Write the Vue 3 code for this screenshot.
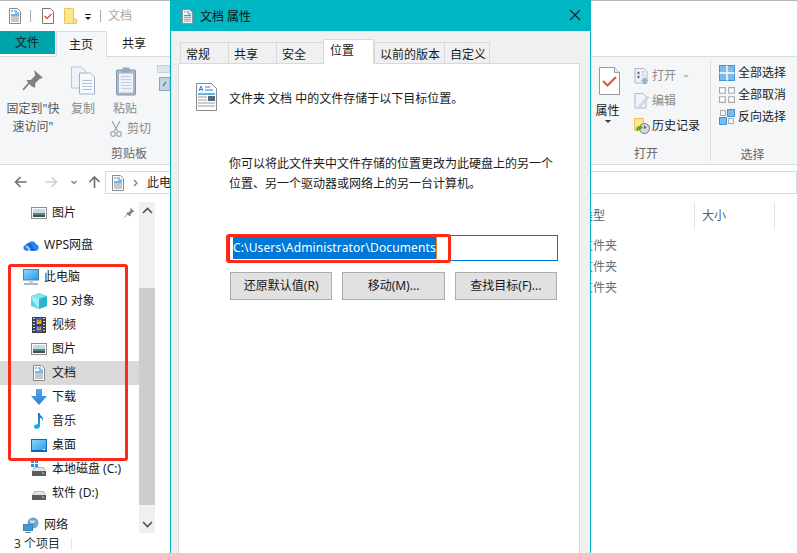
<template>
  <div class="screen">
    <!-- icon sheet -->
    <svg class="defs" width="0" height="0">
      <defs>
        <linearGradient id="g-sky" x1="0" y1="0" x2="1" y2="1">
          <stop offset="0" stop-color="#8fd6fb"/>
          <stop offset="1" stop-color="#1f9cf0"/>
        </linearGradient>
        <linearGradient id="g-down" x1="0" y1="0" x2="0" y2="1">
          <stop offset="0" stop-color="#5aa5ea"/>
          <stop offset="1" stop-color="#2b7fd6"/>
        </linearGradient>
        <linearGradient id="g-note" x1="0" y1="0" x2="0" y2="1">
          <stop offset="0" stop-color="#1565d8"/>
          <stop offset="1" stop-color="#1ab4f5"/>
        </linearGradient>
      </defs>
      <symbol id="doc" viewBox="0 0 12 16">
        <path d="M.5.500h8l3 3v12H.5z" fill="#fff" stroke="#8a8a8a"/>
        <path d="M2 3h2M5 3h3M6 5h4" stroke="#2b7fd6"/>
        <path d="M2 7h8" stroke="#2b9be0" stroke-width="1.400"/>
        <path d="M2 9h8M2 11h8M2 13h8" stroke="#8f8f8f"/>
      </symbol>
      <symbol id="checkdoc" viewBox="0 0 12 16">
        <path d="M.5.500h8l3 3v12H.5z" fill="#fff" stroke="#777"/>
        <path d="M2.500 8l2.500 2.500 4.500-4.500" fill="none" stroke="#e8582a" stroke-width="1.500"/>
      </symbol>
      <symbol id="folder" viewBox="0 0 13 16">
        <path d="M.5.500h9v15h-9z" fill="#fde58e" stroke="#e8c65a"/>
        <path d="M9.500 11h3v4.500h-3z" fill="#fde58e" stroke="#e8c65a"/>
      </symbol>
      <symbol id="pic" viewBox="0 0 16 12">
        <rect x=".5" y=".5" width="15" height="11" fill="#fff" stroke="#8d8d8d"/>
        <rect x="2" y="2" width="12" height="4" fill="#c3d9e8"/>
        <rect x="2" y="6" width="12" height="2" fill="#5a8a78"/>
        <rect x="2" y="8" width="12" height="2" fill="#3f4f58"/>
      </symbol>
      <symbol id="cloud" viewBox="0 0 16 12">
        <path d="M3.200 11.800A3 3 0 0 1 2.600 5.900 3 3 0 0 1 5.500 4 4.200 4.200 0 0 1 13 5.300 3.300 3.300 0 0 1 12.800 11.800z" fill="#2a86ee"/>
        <path d="M5.500 4c2 .3 3.500 2 3.800 4l3.700 3.800H8.200C8 8.500 6.500 6.500 3.500 5.700z" fill="#1668d0"/>
        <path d="M6.500 11.800C6.300 9.500 5 8 3 7.500" stroke="#fff" stroke-width="1.100" fill="none"/>
      </symbol>
      <symbol id="pc" viewBox="0 0 16 16">
        <rect x=".5" y=".5" width="15" height="10.500" fill="url(#g-sky)" stroke="#5a7f9a"/>
        <path d="M6 11.500h4v2.500H6z" fill="#c3ccd6"/>
        <path d="M1 15h14" stroke="#8aa2b8" stroke-width="1.500"/>
      </symbol>
      <symbol id="cube" viewBox="0 0 16 16">
        <path d="M8 0l8 3v10l-8 3-8-3V3z" fill="#58d6e6"/>
        <path d="M8 0l8 3-8 3-8-3z" fill="#7fe3ee"/>
        <path d="M8 6v10l8-3V3z" fill="#2ab4d2"/>
        <path d="M0 3l8 3v10L2 8z" fill="#a6eef2"/>
      </symbol>
      <symbol id="film" viewBox="0 0 14 16">
        <rect width="14" height="16" fill="#3a3f45"/>
        <path d="M1 1.500h2M1 4.500h2M1 7.500h2M1 10.500h2M1 13.500h2M11 1.500h2M11 4.500h2M11 7.500h2M11 10.500h2M11 13.500h2" stroke="#d8d8d8"/>
        <rect x="4" y="1" width="6" height="6" fill="#4d67c8"/>
        <rect x="4" y="9" width="6" height="6" fill="#3f60c0"/>
        <rect x="5" y="3" width="4" height="4" fill="#e8b32a"/>
        <rect x="5" y="10" width="4" height="3" fill="#d9a020"/>
        <path d="M6 4h2M6 11h2" stroke="#b5352a"/>
      </symbol>
      <symbol id="down" viewBox="0 0 16 16">
        <path d="M5 0h6v7h5l-8 9-8-9h5z" fill="url(#g-down)"/>
      </symbol>
      <symbol id="music" viewBox="0 0 10 16">
        <path d="M4 0h1.500c.3 3 4.500 3.500 3.500 8-.5-2-2-3-3-3.200V13c0 2-2 3-3.500 3S0 15 0 13.700 1.800 11 4 11.300z" fill="url(#g-note)"/>
      </symbol>
      <symbol id="desk" viewBox="0 0 16 13">
        <rect x=".5" y=".5" width="15" height="12" fill="url(#g-sky)" stroke="#1668b0"/>
        <path d="M1 11.500h14" stroke="#0f5fa8"/>
        <path d="M12 10.500h2" stroke="#fff"/>
      </symbol>
      <symbol id="drive" viewBox="0 0 14 9">
        <path d="M2.500.5h9l2 4H.5z" fill="#e3e5e6" stroke="#b5b5b5"/>
        <rect x="0" y="4" width="14" height="5" fill="#5a5e60"/>
        <rect x="10" y="5.500" width="2" height="1.500" fill="#5fe35f"/>
      </symbol>
      <symbol id="net" viewBox="0 0 16 16">
        <circle cx="10" cy="6" r="5.500" fill="#6aa5d8"/>
        <path d="M7 3c2 1 4 0 6 1-1 2-5 3-6 1z" fill="#c6dcf0"/>
        <rect x=".5" y="7.500" width="9" height="6" fill="#3a9ce0" stroke="#4f7fa8"/>
        <path d="M2 15.500h6" stroke="#6b8aa8"/>
      </symbol>
      <symbol id="pin" viewBox="0 0 20 20">
        <path d="M11 1l8 7-3 1-4 4 0 4-3-1-3-3-2-3 4 0 4-4z" fill="#808080"/>
        <path d="M7 12l-6 7" stroke="#808080" stroke-width="1.600"/>
      </symbol>
      <symbol id="copy" viewBox="0 0 24 28">
        <path d="M.5.500h10l4 4v17H.5z" fill="#eef3fa" stroke="#b7c6da"/>
        <path d="M8.500 6.500h11l4 4v17h-15z" fill="#f6f9fd" stroke="#9fb2cc"/>
        <path d="M11 14h10M11 17h10M11 20h10M11 23h10" stroke="#b3c1d4"/>
      </symbol>
      <symbol id="paste" viewBox="0 0 20 29">
        <rect x=".5" y="3.500" width="19" height="25" rx="1" fill="#a7b7cc" stroke="#8596ad"/>
        <rect x="3" y="7" width="14" height="19" fill="#eef2f8"/>
        <path d="M5 10h10M5 13h10M5 16h10M5 19h10M5 22h10" stroke="#c2cddd"/>
        <rect x="6.500" y="1" width="7" height="5" fill="#97a8bf"/>
      </symbol>
      <symbol id="scissors" viewBox="0 0 12 16">
        <path d="M2 0l5.500 10M10 0L4.500 10" stroke="#9aa8bb" stroke-width="1.300" fill="none"/>
        <circle cx="3" cy="13" r="2.300" fill="none" stroke="#9aa8bb" stroke-width="1.200"/>
        <circle cx="9" cy="13" r="2.300" fill="none" stroke="#9aa8bb" stroke-width="1.200"/>
      </symbol>
      <symbol id="small" viewBox="0 0 13 26">
        <rect x=".5" y=".5" width="12" height="7" fill="#dde5f0" stroke="#c5d0e0"/>
        <rect x="2.500" y="12.500" width="10.500" height="13" fill="#c6d3e4" stroke="#8ea2bd"/>
        <path d="M6 21l3-4" stroke="#6d83a0" stroke-width="1.500"/>
      </symbol>
      <symbol id="props" viewBox="0 0 21 28">
        <path d="M.5.500h15l5 5v22H.5z" fill="#fff" stroke="#999"/>
        <path d="M15.500.500v5h5" fill="#eee" stroke="#999"/>
        <path d="M4 14l4.500 4.500L17 10" fill="none" stroke="#e8582a" stroke-width="2.200"/>
      </symbol>
      <symbol id="open" viewBox="0 0 15 16">
        <path d="M.5.500h9l3 3V15H.5z" fill="#eef3fa" stroke="#a9b8cc"/>
        <path d="M3 4h2v2H3zM3 8h2v2H3zM7 4h3M7 7h3" stroke="#a9b8cc"/>
        <path d="M10 9l4 4h-2v3H8v-3H6z" fill="#9fb0c6"/>
      </symbol>
      <symbol id="edit" viewBox="0 0 15 16">
        <path d="M.5.500h8l3 3V15H.5z" fill="#f1f5fb" stroke="#a9b8cc"/>
        <path d="M5 12l8-9 1.500 1.500-8 9L4 14z" fill="#d5deea" stroke="#b5c2d3" stroke-width=".6"/>
      </symbol>
      <symbol id="history" viewBox="0 0 16 16">
        <rect x=".5" y=".5" width="9" height="12" fill="#fde58e" stroke="#e8c65a"/>
        <circle cx="10.500" cy="10.500" r="5" fill="#d8d8d8" stroke="#777"/>
        <path d="M10.500 7.500v3l2-1.500" fill="none" stroke="#555"/>
        <path d="M2 12a4 4 0 0 1 4-4v-1l3 2.500-3 2.500v-1a2 2 0 0 0-2 2z" fill="#3fb52f"/>
      </symbol>
      <symbol id="selall" viewBox="0 0 16 16">
        <rect x=".5" y=".5" width="15" height="15" fill="#7fb9ea" stroke="#3a95de"/>
        <path d="M8 .5v15M.5 8h15" stroke="#fff" stroke-width="1.400"/>
      </symbol>
      <symbol id="selnone" viewBox="0 0 14 14">
        <path d="M.5.500h5v5h-5zM8.500.500h5v5h-5zM.5 8.500h5v5h-5zM8.500 8.500h5v5h-5z" fill="#fff" stroke="#a8a8a8"/>
      </symbol>
      <symbol id="selinv" viewBox="0 0 16 16">
        <path d="M1.500 1.500h5v5h-5zM9.500 9.500h5v5h-5z" fill="#f5f6f7" stroke="#a8a8a8"/>
        <path d="M8.500.5h7v7h-7zM.5 8.500h7v7h-7z" fill="#7fb9ea" stroke="#3a95de"/>
      </symbol>
    </svg>

    <!-- explorer window behind the dialog -->
    <div class="explorer">
      <div class="titlebar">
        <svg class="qa-doc"><use href="#doc"/></svg>
        <i class="qa-sep"></i>
        <svg class="qa-check"><use href="#checkdoc"/></svg>
        <svg class="qa-folder"><use href="#folder"/></svg>
        <span class="qa-drop"></span>
        <i class="qa-sep"></i>
        <span class="qa-title">文档</span>
      </div>

      <div class="tabs">
        <span class="tab-file">文件</span>
        <span class="tab-home">主页</span>
        <span class="tab-share">共享</span>
      </div>

      <div class="ribbon">
        <div class="rb-left">
          <div class="rb-pin">
            <svg class="ic-pin"><use href="#pin"/></svg>
            <span>固定到"快<br>速访问"</span>
          </div>
          <div class="rb-copy">
            <svg class="ic-copy"><use href="#copy"/></svg>
            <span>复制</span>
          </div>
          <div class="rb-clip">
            <div class="rb-clip-top">
              <div class="rb-paste">
                <svg class="ic-paste"><use href="#paste"/></svg>
                <span>粘贴</span>
              </div>
              <svg class="ic-small"><use href="#small"/></svg>
            </div>
            <div class="rb-cut">
              <svg class="ic-sc"><use href="#scissors"/></svg>
              <span>剪切</span>
            </div>
            <div class="rb-label">剪贴板</div>
          </div>
        </div>

        <div class="rb-right">
          <div class="rb-open">
            <div class="rb-open-top">
              <div class="rb-props">
                <svg class="ic-props"><use href="#props"/></svg>
                <span>属性</span>
                <i class="drop"></i>
              </div>
              <div class="rb-open-list">
                <div class="rb-item dim"><svg><use href="#open"/></svg>打开<i class="drop dim-drop"></i></div>
                <div class="rb-item dim"><svg><use href="#edit"/></svg>编辑</div>
                <div class="rb-item"><svg><use href="#history"/></svg>历史记录</div>
              </div>
            </div>
            <div class="rb-label">打开</div>
          </div>
          <div class="rb-select">
            <div class="rb-select-list">
              <div class="rb-item"><svg><use href="#selall"/></svg>全部选择</div>
              <div class="rb-item"><svg><use href="#selnone"/></svg>全部取消</div>
              <div class="rb-item"><svg><use href="#selinv"/></svg>反向选择</div>
            </div>
            <div class="rb-label">选择</div>
          </div>
        </div>
      </div>

      <div class="addr">
        <svg class="nav-btns" width="100" height="22" viewBox="0 0 100 22">
          <path d="M24 11H13M18 6l-5 5 5 5" fill="none" stroke="#6d6d6d" stroke-width="1.600"/>
          <path d="M43 11h11M49 6l5 5-5 5" fill="none" stroke="#cfcfcf" stroke-width="1.600"/>
          <path d="M69 10l2.500 2.500L74 10" fill="none" stroke="#808080" stroke-width="1.300"/>
          <path d="M92 17V6M87 11l5-5 5 5" fill="none" stroke="#6d6d6d" stroke-width="1.600"/>
        </svg>
        <div class="addr-box">
          <svg class="addr-doc"><use href="#doc"/></svg>
          <svg class="addr-chev" width="6" height="8" viewBox="0 0 6 8"><path d="M1 1l3 3-3 3" fill="none" stroke="#777" stroke-width="1.200"/></svg>
          <span>此电脑</span>
        </div>
      </div>

      <div class="body">
        <div class="nav">
          <div class="tree">
            <div
              v-for="row in rows"
              :key="row.text + row.icon + row.cls"
              class="row"
              :class="[row.cls, { current: row.current }]"
            >
              <svg class="row-icon" :class="'i-' + row.icon"><use :href="'#' + row.icon"/></svg>
              <span>{{ row.text }}</span>
              <svg v-if="row.pinned" class="row-pin"><use href="#pin"/></svg>
            </div>
          </div>
          <div class="scroll">
            <svg class="sb-arrow" width="17" height="17" viewBox="0 0 17 17"><path d="M4 11l4.500-4.500L13 11" fill="none" stroke="#505050" stroke-width="1.600"/></svg>
            <div class="sb-track"><div class="sb-thumb"></div></div>
            <svg class="sb-arrow" width="17" height="17" viewBox="0 0 17 17"><path d="M4 6l4.500 4.500L13 6" fill="none" stroke="#505050" stroke-width="1.600"/></svg>
          </div>
        </div>

        <div class="files">
          <div class="col-head">
            <span class="col-type">类型</span>
            <span class="col-size">大小</span>
          </div>
          <div v-for="n in 3" :key="n" class="file-row">文件夹</div>
        </div>
      </div>

      <div class="status"><span>3 个项目</span><i></i></div>
    </div>

    <!-- properties dialog -->
    <div class="dialog">
      <div class="dlg-title">
        <svg class="dlg-ic"><use href="#doc"/></svg>
        <span class="dlg-name">文档 属性</span>
        <svg class="dlg-close" width="12" height="12" viewBox="0 0 12 12"><path d="M1 1l10 10M11 1L1 11" stroke="#222" stroke-width="1.100"/></svg>
      </div>
      <div class="dlg-body">
        <div class="dlg-tabs">
          <span v-for="t in dlgTabs" :key="t.name" class="dlg-tab" :class="{ on: t.on }" :style="{ width: t.w + 'px' }">{{ t.name }}</span>
        </div>
        <div class="panel">
          <div class="panel-head">
            <svg class="panel-doc" viewBox="0 0 21 28">
              <path d="M.5.500h15l5 5v22H.5z" fill="#fff" stroke="#8a8a8a"/>
              <path d="M3 8l2-5 2 5M4 6.500h2M9 4h5M9 7h8" fill="none" stroke="#2b7fd6"/>
              <path d="M2 11h17" stroke="#2b9be0" stroke-width="1.500"/>
              <path d="M2 14h9M2 17h9M2 20h17M2 23h17" stroke="#999"/>
              <rect x="12" y="13" width="7" height="5" fill="#566b78"/>
            </svg>
            <span>文件夹 文档 中的文件存储于以下目标位置。</span>
          </div>
          <p class="panel-text">你可以将此文件夹中文件存储的位置更改为此硬盘上的另一个<br>位置、另一个驱动器或网络上的另一台计算机。</p>
          <div class="path-input"><span class="path-sel">C:\Users\Administrator\Documents</span></div>
          <div class="btns">
            <button>还原默认值(R)</button>
            <button>移动(M)...</button>
            <button>查找目标(F)...</button>
          </div>
        </div>
      </div>
    </div>

    <!-- red annotation frames -->
    <div class="mark mark-nav"></div>
    <div class="mark mark-path"></div>
  </div>
</template>

<script setup>
const rows = [
  { icon: "pic", text: "图片", cls: "sub first", pinned: true },
  { icon: "cloud", text: "WPS网盘", cls: "top gap" },
  { icon: "pc", text: "此电脑", cls: "top gap" },
  { icon: "cube", text: "3D 对象", cls: "sub" },
  { icon: "film", text: "视频", cls: "sub" },
  { icon: "pic", text: "图片", cls: "sub" },
  { icon: "doc", text: "文档", cls: "sub", current: true },
  { icon: "down", text: "下载", cls: "sub" },
  { icon: "music", text: "音乐", cls: "sub" },
  { icon: "desk", text: "桌面", cls: "sub" },
  { icon: "drive", text: "本地磁盘 (C:)", cls: "sub win" },
  { icon: "drive", text: "软件 (D:)", cls: "sub" },
  { icon: "net", text: "网络", cls: "top gap" },
];

const dlgTabs = [
  { name: "常规", w: 48 },
  { name: "共享", w: 48 },
  { name: "安全", w: 47 },
  { name: "位置", w: 51, on: true },
  { name: "以前的版本", w: 70 },
  { name: "自定义", w: 46 },
];
</script>

<style>
html, body { margin: 0; background: #fff; overflow: hidden; }
</style>

<style scoped>
* { box-sizing: border-box; }
.screen {
  position: relative;
  width: 797px;
  height: 553px;
  overflow: hidden;
  background: #fff;
  color: #1a1a1a;
  font: 12px/16px "Noto Sans", "Noto Sans CJK SC", sans-serif;
}
.defs { position: absolute; }
.explorer { display: flex; flex-direction: column; height: 553px; }

.titlebar {
  display: flex;
  align-items: center;
  height: 31px;
  padding-left: 9px;
  border-top: 1px solid #b5b5b5;
}
.qa-doc { width: 12px; height: 16px; }
.qa-sep { width: 1px; height: 12px; background: #a8a8a8; margin: 0 9px; }
.qa-check { width: 12px; height: 16px; margin-left: 2px; }
.qa-folder { width: 13px; height: 16px; margin-left: 10px; }
.qa-drop {
  width: 6px; height: 7px; margin-left: 8px; margin-top: 3px;
  border-top: 1px solid #222;
  position: relative;
}
.qa-drop::after {
  content: ""; position: absolute; left: 0; top: 2px;
  border: 3px solid transparent; border-top-color: #222; border-bottom: 0;
}
.qa-title { color: #a8a8a8; margin-left: -2px; }

.tabs { display: flex; height: 26px; border-bottom: 1px solid #dadbdc; align-items: flex-start; }
.tab-file { width: 55px; height: 23px; background: #00a3aa; padding-left: 15px; line-height: 23px; }
.tab-home {
  width: 51px; height: 26px; margin-left: 1px; padding-left: 12px; line-height: 25px;
  background: #f5f6f7; border: 1px solid #dadbdc; border-bottom: 0;
}
.tab-share { margin-left: 15px; line-height: 25px; }

.ribbon {
  display: flex;
  justify-content: space-between;
  height: 108px;
  background: #f5f6f7;
  border-bottom: 1px solid #dadbdc;
}
.rb-left { display: flex; color: #666; }
.rb-pin { width: 66px; padding-top: 12px; text-align: center; line-height: 18px; color: #555; }
.ic-pin { display: block; width: 22px; height: 22px; margin: 0 auto 9px 22px; }
.rb-copy { width: 34px; padding-top: 9px; text-align: center; color: #8a8a8a; }
.ic-copy { display: block; width: 24px; height: 29px; margin: 0 auto 6px 5px; }
.rb-clip { display: flex; flex-direction: column; position: relative; width: 70px; }
.rb-clip-top { display: flex; justify-content: space-between; padding-top: 9px; }
.rb-paste { width: 36px; text-align: center; color: #8a8a8a; margin-left: 7px; }
.ic-paste { display: block; width: 20px; height: 30px; margin: 0 0 5px 9px; }
.ic-small { width: 13px; height: 26px; margin-top: -1px; }
.rb-cut { display: flex; align-items: center; gap: 5px; margin: 4px 0 0 10px; color: #8a8a8a; }
.ic-sc { width: 12px; height: 16px; }
.rb-label { text-align: center; color: #666; }
.rb-clip .rb-label { margin: 9px 0 0 -12px; }

.rb-right { display: flex; width: 206px; }
.rb-open { width: 120px; display: flex; flex-direction: column; border-right: 1px solid #dfe0e1; margin: 3px 0; }
.rb-open-top { display: flex; flex: 1; }
.rb-props { width: 43px; padding: 7px 10px 0 0; text-align: center; display: flex; flex-direction: column; align-items: center; }
.ic-props { width: 21px; height: 28px; margin: 0 0 8px 4px; flex: none; }
.rb-props span { white-space: nowrap; }
.drop { width: 0; height: 0; border: 3px solid transparent; border-top-color: #333; border-bottom: 0; margin-top: 1px; }
.dim-drop { border-top-color: #bdbdbd; margin: 1px 0 0 5px; }
.rb-open-list { padding-top: 3px; }
.rb-item { display: flex; align-items: center; height: 25px; gap: 2px; }
.rb-item svg { width: 16px; height: 16px; flex: none; }
.rb-item.dim { color: #8a8a8a; }
.rb-open .rb-label { margin: 0 0 -1px -9px; }
.rb-select { flex: 1; display: flex; flex-direction: column; padding: 3px 0 1px 8px; }
.rb-select-list { flex: 1; padding-top: 2px; }
.rb-select .rb-item { height: 22px; gap: 3px; color: #222; }
.rb-select .rb-label { margin-left: -11px; padding-bottom: 0; }

.addr { display: flex; height: 33px; padding-top: 6px; }
.nav-btns { flex: none; width: 105px; }
.addr-box {
  flex: 1; height: 23px; border: 1px solid #d9d9d9;
  display: flex; align-items: center; padding-left: 6px;
}
.addr-doc { width: 12px; height: 16px; }
.addr-chev { margin: 0 8px 0 9px; }

.body { flex: 1; display: flex; min-height: 0; }
.nav { width: 155px; display: flex; flex: none; height: 335px; }
.tree { width: 139px; padding-top: 3px; }
.row { display: flex; align-items: center; height: 24px; position: relative; white-space: nowrap; }
.row.sub { padding-left: 31px; }
.row.top { padding-left: 23px; }
.row.gap { margin-top: 8px; }
.row.current { background: #d9d9d9; }
.row-icon { flex: none; width: 16px; height: 16px; margin-right: 5px; }
.i-pic { height: 12px; }
.i-doc { width: 12px; margin: 0 7px 0 2px; }
.i-music { width: 10px; margin: 0 8px 0 3px; }
.i-desk { height: 13px; }
.i-drive { width: 14px; height: 9px; margin: 5px 6px 0 1px; }
.row.win::before {
  content: ""; position: absolute; left: 31px; top: 3px; width: 7px; height: 7px;
  background: linear-gradient(#fff 0 0) 3px 0 / 1px 100% no-repeat, linear-gradient(#fff 0 0) 0 3px / 100% 1px no-repeat, #1a9be8;
}
.row-pin { position: absolute; left: 124px; top: 6px; width: 11px; height: 11px; }
.scroll { width: 16px; margin-top: 4px; display: flex; flex-direction: column; background: #f0f0f0; }
.sb-arrow { display: block; flex: none; }
.sb-track { flex: 1; padding-top: 69px; }
.sb-thumb { height: 217px; background: #cdcdcd; }

.files { flex: 1; padding-left: 426px; }
.col-head { display: flex; height: 30px; align-items: center; margin-top: 2px; color: #4a5f78; }
.col-type { width: 113px; height: 27px; line-height: 27px; }
.col-size { width: 81px; height: 27px; line-height: 27px; padding-left: 7px; border-left: 1px solid #e5e5e5; border-right: 1px solid #e5e5e5; }
.file-row { height: 21px; line-height: 21px; color: #6d6d6d; position: relative; top: 5px; }

.status { display: flex; align-items: center; height: 18px; padding-left: 14px; margin-top: auto; color: #333; }
.status i { width: 1px; height: 12px; background: #e5e5e5; margin-left: 11px; }

.dialog {
  position: absolute; left: 170px; top: 0; width: 421px; height: 560px;
  display: flex; flex-direction: column;
  border: 1px solid #00b7c3;
  border-top: 0;
  background: #f0f0f0;
}
.dlg-title {
  display: flex; align-items: center; height: 31px; padding: 1px 10px 0 11px;
  background: #00b7c3; color: #111; flex: none;
}
.dlg-ic { width: 11px; height: 15px; margin-right: 7px; }
.dlg-name { margin-top: 1px; }
.dlg-close { margin: -2px -1px 0 auto; }
.dlg-body { flex: 1; display: flex; flex-direction: column; padding: 9px 10px 0 7px; }
.dlg-tabs { display: flex; height: 24px; padding-left: 2px; align-items: flex-end; position: relative; z-index: 1; margin-bottom: -1px; }
.dlg-tab {
  height: 22px; line-height: 23px; padding-left: 5px;
  border: 1px solid #d9d9d9; border-right: 0; border-bottom: 1px solid #d9d9d9;
  background: #f0f0f0; margin-top: 2px;
}
.dlg-tab:nth-child(6) { border-right: 1px solid #d9d9d9; }
.dlg-tab.on {
  height: 25px; background: #fff; border: 1px solid #d9d9d9; border-bottom: 0; line-height: 21px; margin-top: 0;
  padding-left: 6px; padding-bottom: 4px;
}
.panel { flex: 1; background: #fff; border: 1px solid #d9d9d9; padding: 19px 22px 0 17px; }
.panel-head { display: flex; align-items: center; gap: 12px; }
.panel-head span { margin-top: 4px; }
.panel-doc { width: 21px; height: 28px; flex: none; }
.panel-text { margin: 43px 0 0 33px; line-height: 20px; white-space: nowrap; }
.path-input {
  margin: 41px 0 0 33px; height: 26px; width: 329px;
  border: 1px solid #0078d7; padding: 1px 0 0 3px; line-height: 22px;
}
.path-sel {
  display: inline-block; background: #0078d7; color: #fff; height: 22px;
  letter-spacing: .125px; border-right: 1px solid #f08020; vertical-align: top;
}
.btns { display: flex; gap: 10px; margin: 11px 0 0 34px; width: 327px; }
.btns button {
  flex: 1; height: 28px; padding: 0;
  background: #e1e1e1; border: 1px solid #adadad; color: #1a1a1a;
  font: inherit;
}

.mark { position: absolute; border: 3px solid #ff2a1a; border-radius: 3px; }
.mark-nav { left: 8px; top: 264px; width: 120px; height: 197px; }
.mark-path { left: 226px; top: 234px; width: 225px; height: 29px; }
</style>
